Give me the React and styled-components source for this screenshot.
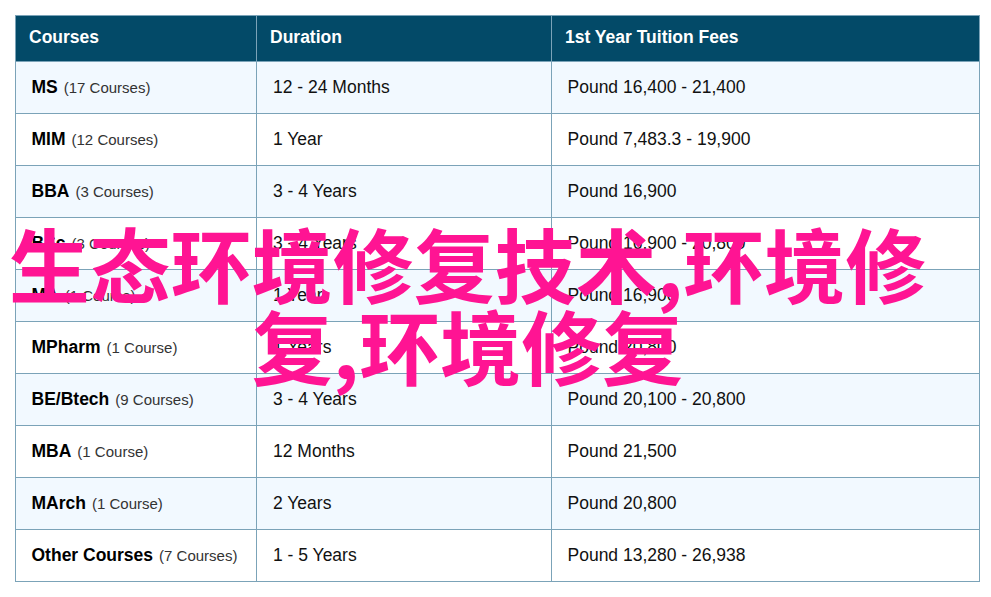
import React from "react";
import styled, { createGlobalStyle } from "styled-components";

const Global = createGlobalStyle`
  html, body { margin: 0; padding: 0; background: #fff; }
  body { width: 991px; height: 597px; overflow: hidden; font-family: "Liberation Sans", Arial, sans-serif; }
`;
const Page = styled.div`
  position: relative;
  width: 991px;
  height: 597px;
  padding: 15px 12px 0 15px;
  box-sizing: border-box;
`;
const Table = styled.table`
  width: 964px;
  table-layout: fixed;
  border-collapse: collapse;
  border: 1px solid #7ba3b8;
`;
const HeadCell = styled.th`
  height: 46px;
  padding: 0 0 2px 13px;
  box-sizing: border-box;
  background: #034a68;
  border: 1px solid #7ba3b8;
  color: #fff;
  font-size: 17.5px;
  font-weight: 700;
  text-align: left;
  width: ${(p) => p.$w}px;
`;
const Row = styled.tr`
  background: ${(p) => (p.$tint ? "#f2f9ff" : "#fff")};
`;
const Cell = styled.td`
  height: 52px;
  padding: 0 0 0 ${(p) => p.$pad}px;
  box-sizing: border-box;
  border: 1px solid #7ba3b8;
  color: #111;
  font-size: 17.5px;
  vertical-align: middle;
`;
const Name = styled.strong`
  font-weight: 700;
  color: #000;
`;
const Count = styled.span`
  margin-left: 6px;
  font-size: 15px;
  color: #333;
`;
const Overlay = styled.div`
  position: absolute;
  left: 0;
  top: 221px;
  width: 935px;
  text-align: center;
  color: #ff1493;
  font-family: "Noto Sans CJK SC", sans-serif;
  font-size: 81px;
  font-weight: 700;
  line-height: 82px;
`;

const rows = [
  ["MS", "17 Courses", "12 - 24 Months", "Pound 16,400 - 21,400"],
  ["MIM", "12 Courses", "1 Year", "Pound 7,483.3 - 19,900"],
  ["BBA", "3 Courses", "3 - 4 Years", "Pound 16,900"],
  ["BSc", "3 Courses", "3 - 4 Years", "Pound 16,900 - 20,800"],
  ["MA", "1 Course", "1 Year", "Pound 16,900"],
  ["MPharm", "1 Course", "1 Years", "Pound 20,800"],
  ["BE/Btech", "9 Courses", "3 - 4 Years", "Pound 20,100 - 20,800"],
  ["MBA", "1 Course", "12 Months", "Pound 21,500"],
  ["MArch", "1 Course", "2 Years", "Pound 20,800"],
  ["Other Courses", "7 Courses", "1 - 5 Years", "Pound 13,280 - 26,938"],
];

export default function App() {
  return (
    <Page>
      <Global />
      <Table>
        <thead>
          <tr>
            <HeadCell $w={241}>Courses</HeadCell>
            <HeadCell $w={295}>Duration</HeadCell>
            <HeadCell $w={428}>1st Year Tuition Fees</HeadCell>
          </tr>
        </thead>
        <tbody>
          {rows.map((r, i) => (
            <Row key={r[0]} $tint={i % 2 === 0}>
              <Cell $pad={15.5}>
                <Name>{r[0]}</Name>
                <Count>({r[1]})</Count>
              </Cell>
              <Cell $pad={16}>{r[2]}</Cell>
              <Cell $pad={15.5}>{r[3]}</Cell>
            </Row>
          ))}
        </tbody>
      </Table>
      <Overlay>生态环境修复技术,环境修复,环境修复</Overlay>
    </Page>
  );
}
